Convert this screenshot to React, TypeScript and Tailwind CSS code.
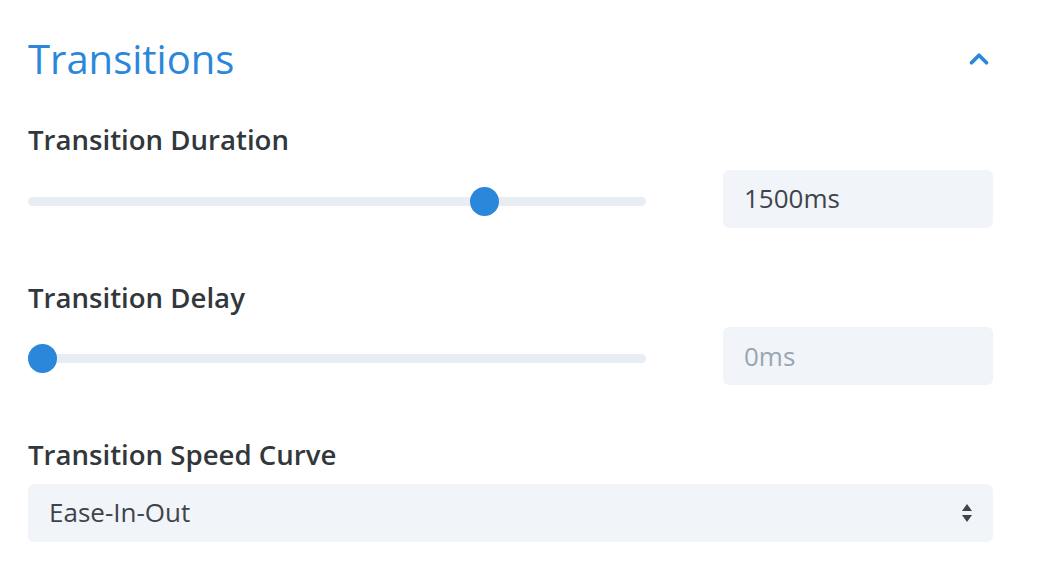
import { ChevronUp } from 'lucide-react';

function Slider({ pct }: { pct: number }) {
  return (
    <div className="relative flex-1 h-[9px] bg-[#e8edf4] rounded-full">
      <div
        className="absolute top-1/2 w-[29px] h-[29px] -mt-[14.5px] -ml-[14.5px] bg-[#2b87da] rounded-full"
        style={{ left: `calc(14.5px + (100% - 29px) * ${pct})` }}
      />
    </div>
  );
}

function RangeRow({ label, value, pct, muted }: { label: string; value: string; pct: number; muted?: boolean }) {
  return (
    <div>
      <div className="text-[27.6px] font-semibold text-[#32373c] leading-none">{label}</div>
      <div className="flex items-center mt-[16px]">
        <div className="w-[618px] flex mt-[5px]"><Slider pct={pct} /></div>
        <div className="ml-[77px] w-[270px] h-[58px] bg-[#f1f4f9] rounded-[6px] flex items-center px-[21px]">
          <span className={`text-[26px] ${muted ? 'text-[#9aa5b3]' : 'text-[#3e444c]'}`}>{value}</span>
        </div>
      </div>
    </div>
  );
}

export default function App() {
  return (
    <div className="w-[1040px] h-[576px] bg-white px-[28px] pt-[36px]" style={{ fontFamily: '"Open Sans", sans-serif' }}>
      <div className="w-[965px]">
        <div className="flex items-center justify-between h-[46px]">
          <h2 className="text-[40px] text-[#2b87da] leading-none">Transitions</h2>
          <ChevronUp size={30} strokeWidth={3} className="text-[#2b87da] -mr-[1px]" />
        </div>
        <div className="mt-[44px] space-y-[56px]">
          <RangeRow label="Transition Duration" value="1500ms" pct={0.75} />
          <RangeRow label="Transition Delay" value="0ms" pct={0} muted />
        </div>
        <div className="mt-[56px]">
          <div className="text-[27.6px] font-semibold text-[#32373c] leading-none">Transition Speed Curve</div>
          <div className="mt-[15px] h-[58px] bg-[#f1f4f9] rounded-[6px] flex items-center justify-between pl-[21px] pr-[20px]">
            <span className="text-[26px] text-[#3e444c]">Ease-In-Out</span>
            <svg width="12" height="22" viewBox="0 0 12 22" className="text-[#3e444c]">
              <path d="M6 2 L11 9 H1 Z" fill="currentColor" />
              <path d="M6 20 L11 13 H1 Z" fill="currentColor" />
            </svg>
          </div>
        </div>
      </div>
    </div>
  );
}
